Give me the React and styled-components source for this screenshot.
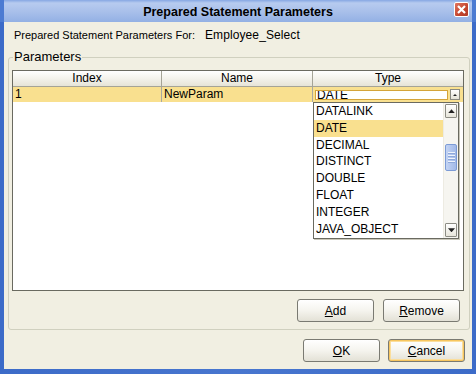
import styled, { createGlobalStyle } from "styled-components"

const GlobalStyle = createGlobalStyle`
  html, body { margin: 0; padding: 0; background: #ffffff; }
  body { font-family: "Liberation Sans", Arial, sans-serif; color: #000; }
`

const types = ["DATALINK", "DATE", "DECIMAL", "DISTINCT", "DOUBLE", "FLOAT", "INTEGER", "JAVA_OBJECT"]

const Frame = styled.div`
  width: 476px;
  height: 374px;
  box-sizing: border-box;
  display: flex;
  flex-direction: column;
  background: linear-gradient(to right, #3C6BC8, #4876CF 50%, #3C6BC8);
  padding-bottom: 5px;
`

const TitleBar = styled.div`
  height: 22px;
  flex: none;
  display: grid;
  grid-template-columns: 1fr auto 1fr;
  align-items: center;
  border-left: 4px solid #4C7BD2;
  border-right: 4px solid #4C7BD2;
  background: linear-gradient(to bottom, #86A7E3 0px, #B7CBEF 3px, #A8BFEA 12px, #93B0E4 22px);
`

const Title = styled.div`
  grid-column: 2;
  font-size: 12.5px;
  font-weight: bold;
  color: #000;
  padding-top: 1px;
`

const CloseButton = styled.div`
  grid-column: 3;
  justify-self: end;
  margin-right: 3px;
  margin-top: -3px;
  width: 13px;
  height: 13px;
  border: 1px solid #ffffff;
  border-radius: 2px;
  background: linear-gradient(135deg, #E0735E, #C4452F 60%, #B03A26);
  display: flex;
  align-items: center;
  justify-content: center;
`

const Body = styled.div`
  flex: 1;
  margin: 0 4px;
  background: #F1EFE2;
  display: flex;
  flex-direction: column;
  padding: 0 2px 0 4px;
`

const LabelRow = styled.div`
  height: 16px;
  margin-top: 5px;
  padding-left: 6px;
  display: flex;
  align-items: center;
  gap: 10px;
`

const Label = styled.span`
  font-size: 11px;
`

const Value = styled.span`
  font-size: 12px;
  letter-spacing: 0.1px;
`

const GroupBox = styled.fieldset`
  margin: 7px 0 0 0;
  min-width: 0;
  border: 1px solid #D0D0BF;
  border-radius: 3px;
  padding: 6px 5px 7px 3px;
  display: flex;
  flex-direction: column;
`

const GroupTitle = styled.legend`
  font-size: 13px;
  line-height: 14px;
  padding: 0 1px;
  margin-left: 1px;
`

const TableBox = styled.div`
  position: relative;
  height: 221px;
  box-sizing: border-box;
  border: 1px solid #6A6A60;
  background: #ffffff;
`

const Row = styled.div`
  display: grid;
  grid-template-columns: 149px 151px 1fr;
  height: ${p => p.$h}px;
`

const HeaderCell = styled.div`
  box-sizing: border-box;
  border-right: 1px solid #A5A497;
  border-bottom: 1px solid #A5A497;
  background: linear-gradient(to bottom, #FFFFFF 0%, #F6F5EF 40%, #E6E4D8 100%);
  font-size: 12px;
  line-height: 15px;
  text-align: center;
  &:last-child { border-right: none; }
`

const DataCell = styled.div`
  box-sizing: border-box;
  border-right: 1px solid #A9A8A0;
  background: #F9E08F;
  font-size: 12px;
  line-height: 15px;
  padding-left: 2px;
  overflow: hidden;
  display: flex;
  align-items: center;
  &:last-child { border-right: none; padding: 0 3px 0 2px; }
`

const ComboField = styled.div`
  flex: 1;
  height: 10px;
  box-sizing: border-box;
  border: 1px solid #D4A43A;
  background: #ffffff;
  font-size: 12px;
  line-height: 8px;
  padding-left: 1px;
  overflow: hidden;
`

const ComboButton = styled.div`
  width: 8px;
  height: 9px;
  margin-left: 2px;
  border: 1px solid #8A8A80;
  background: linear-gradient(to bottom, #FFFFFF, #E4E2D6);
  display: flex;
  align-items: center;
  justify-content: center;
`

const Popup = styled.div`
  position: absolute;
  left: 300px;
  top: 31px;
  width: 146px;
  height: 137px;
  box-sizing: border-box;
  border: 1px solid #6A6A60;
  background: #ffffff;
  display: flex;
  box-shadow: 1px 1px 0 #C9C7BA;
`

const ItemList = styled.div`
  flex: 1;
  display: flex;
  flex-direction: column;
`

const Item = styled.div`
  height: 16.8px;
  font-size: 12px;
  line-height: 17px;
  padding-left: 2px;
  background: ${p => (p.$selected ? "#F9E08F" : "transparent")};
`

const ScrollBar = styled.div`
  width: 14px;
  display: flex;
  flex-direction: column;
  background: #F6F5F0;
  border-left: 1px solid #EDEBE2;
  padding: 1px 0;
`

const ScrollArrow = styled.div`
  height: 12px;
  margin: 0 1px;
  border: 1px solid #8C8C84;
  border-radius: 1px;
  background: linear-gradient(to bottom, #FFFFFF, #E7E5DA);
  display: flex;
  align-items: center;
  justify-content: center;
`

const Track = styled.div`
  flex: 1;
  display: flex;
  flex-direction: column;
  padding-top: 26px;
`

const Thumb = styled.div`
  height: 25px;
  margin: 0 1px;
  border: 1px solid #7C9BD6;
  border-radius: 2px;
  background: linear-gradient(to right, #C4D4F3, #B2C6EE 50%, #A3BAE8);
  display: flex;
  flex-direction: column;
  align-items: center;
  justify-content: center;
  gap: 1px;
`

const Grip = styled.div`
  width: 7px;
  height: 1px;
  background: #EEF3FC;
  border-bottom: 1px solid #8EA8DA;
`

const ButtonRow = styled.div`
  display: flex;
  justify-content: flex-end;
  gap: ${p => p.$gap}px;
  margin-top: ${p => p.$top}px;
  padding-right: ${p => p.$right}px;
`

const Button = styled.div`
  width: 77px;
  height: 23px;
  box-sizing: border-box;
  border: 1px solid #7A7A72;
  border-radius: 3px;
  background: linear-gradient(to bottom, #FFFFFF 0%, #F5F4EE 50%, #E3E1D6 100%);
  box-shadow: ${p => (p.$focused ? "inset 0 0 0 1px #F7C65F, inset 0 0 0 2px #FBDE9C" : "none")};
  font-size: 12px;
  display: flex;
  align-items: center;
  justify-content: center;
  u { text-decoration: underline; }
`

const Triangle = ({ down, size = 7 }) => (
  <svg width={size} height={size / 2 + 1} viewBox="0 0 7 4">
    <path d={down ? "M0 0 L7 0 L3.5 4 Z" : "M0 4 L7 4 L3.5 0 Z"} fill="#222" />
  </svg>
)

export default function App() {
  return (
    <>
      <GlobalStyle />
      <Frame>
        <TitleBar>
          <Title>Prepared Statement Parameters</Title>
          <CloseButton>
            <svg width="9" height="9" viewBox="0 0 9 9">
              <path d="M1 1 L8 8 M8 1 L1 8" stroke="#fff" strokeWidth="2.2" />
            </svg>
          </CloseButton>
        </TitleBar>
        <Body>
          <LabelRow>
            <Label>Prepared Statement Parameters For:</Label>
            <Value>Employee_Select</Value>
          </LabelRow>
          <GroupBox>
            <GroupTitle>Parameters</GroupTitle>
            <TableBox>
              <Row $h={16}>
                <HeaderCell>Index</HeaderCell>
                <HeaderCell>Name</HeaderCell>
                <HeaderCell>Type</HeaderCell>
              </Row>
              <Row $h={15}>
                <DataCell>1</DataCell>
                <DataCell>NewParam</DataCell>
                <DataCell>
                  <ComboField>DATE</ComboField>
                  <ComboButton>
                    <svg width="4" height="2" viewBox="0 0 4 2">
                      <path d="M0 2 L4 2 L2 0 Z" fill="#222" />
                    </svg>
                  </ComboButton>
                </DataCell>
              </Row>
              <Popup>
                <ItemList>
                  {types.map(t => (
                    <Item key={t} $selected={t === "DATE"}>{t}</Item>
                  ))}
                </ItemList>
                <ScrollBar>
                  <ScrollArrow><Triangle /></ScrollArrow>
                  <Track>
                    <Thumb>
                      <Grip /><Grip /><Grip /><Grip />
                    </Thumb>
                  </Track>
                  <ScrollArrow><Triangle down /></ScrollArrow>
                </ScrollBar>
              </Popup>
            </TableBox>
            <ButtonRow $gap={9} $top={8} $right={4}>
              <Button><span><u>A</u>dd</span></Button>
              <Button><span><u>R</u>emove</span></Button>
            </ButtonRow>
          </GroupBox>
          <ButtonRow $gap={8} $top={9} $right={5}>
            <Button><span><u>O</u>K</span></Button>
            <Button $focused><span><u>C</u>ancel</span></Button>
          </ButtonRow>
        </Body>
      </Frame>
    </>
  )
}
